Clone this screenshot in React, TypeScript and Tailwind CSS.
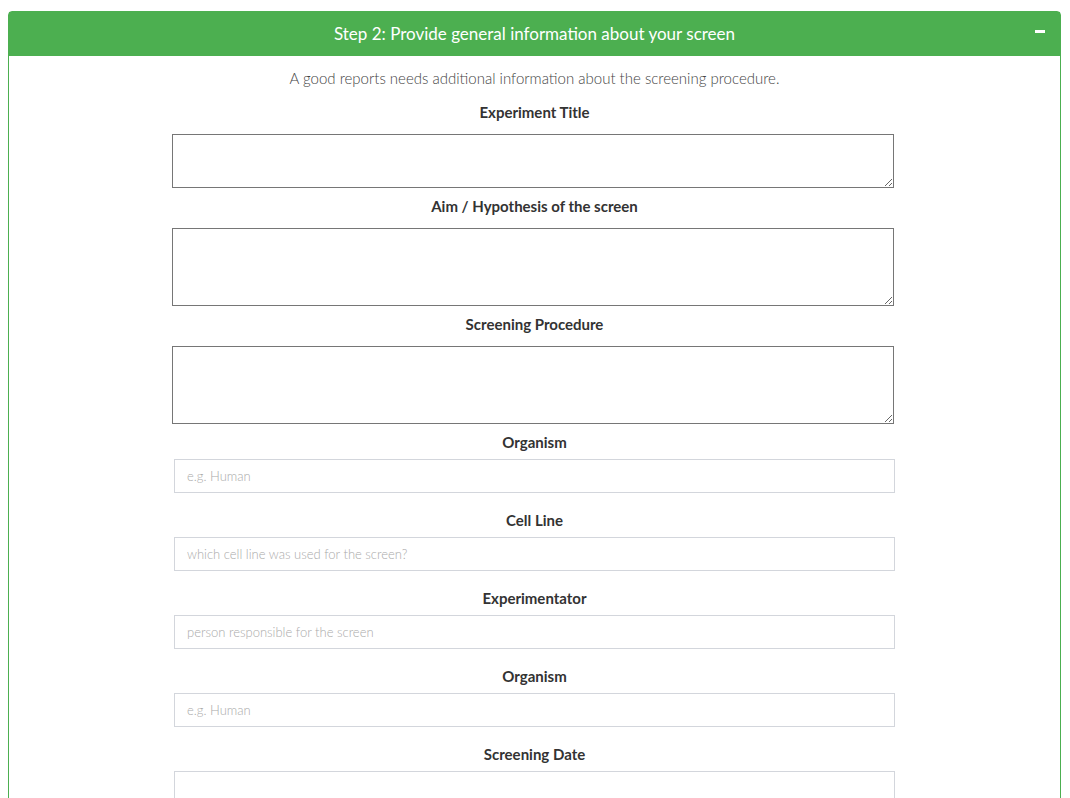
const textareas = [
  { label: "Experiment Title", h: "h-[54px]" },
  { label: "Aim / Hypothesis of the screen", h: "h-[78px]" },
  { label: "Screening Procedure", h: "h-[78px]" },
];

const inputs = [
  { label: "Organism", placeholder: "e.g. Human" },
  { label: "Cell Line", placeholder: "which cell line was used for the screen?" },
  { label: "Experimentator", placeholder: "person responsible for the screen" },
  { label: "Organism", placeholder: "e.g. Human" },
  { label: "Screening Date", placeholder: "" },
];

export default function App() {
  return (
    <div
      className="min-h-screen bg-white px-2 pt-[11px] overflow-hidden h-[798px]"
      style={{ fontFamily: "Lato, 'Noto Sans', sans-serif" }}
    >
      <div className="w-[1053px] rounded-t border border-[#4caf50]">
        <div className="relative flex h-[44px] items-center justify-center bg-[#4caf50] text-[17px] text-white">
          Step 2: Provide general information about your screen
          <span className="absolute right-[15px] top-[18px] h-[3px] w-[10px] bg-white" />
        </div>
        <div className="pt-[11px] pb-10">
          <p className="text-center text-[15px] font-light leading-[22px] text-[#444]">
            A good reports needs additional information about the screening procedure.
          </p>
          <div className="mx-auto w-[721px]">
            {textareas.map((t, i) => (
              <div key={i} className={i === 0 ? "mt-[14px]" : "mt-[9px]"}>
                <label className="block text-center text-[15px] font-bold leading-[18px] text-[#333]">
                  {t.label}
                </label>
                <textarea
                  className={`mt-[13px] block w-[722px] -translate-x-[2px] border border-[#767676] ${t.h}`}
                />
              </div>
            ))}
            {inputs.map((f, i) => (
              <div key={i} className={i === 0 ? "mt-[9px]" : "mt-[18px]"}>
                <label className="block text-center text-[15px] font-bold leading-[18px] text-[#333]">
                  {f.label}
                </label>
                <input
                  placeholder={f.placeholder}
                  className="mt-[8px] block h-[34px] w-full border border-[#d3d6dc] px-[12px] text-[13px] text-[#333] placeholder:font-light placeholder:text-[#aaa] outline-none"
                />
              </div>
            ))}
          </div>
        </div>
      </div>
    </div>
  );
}
